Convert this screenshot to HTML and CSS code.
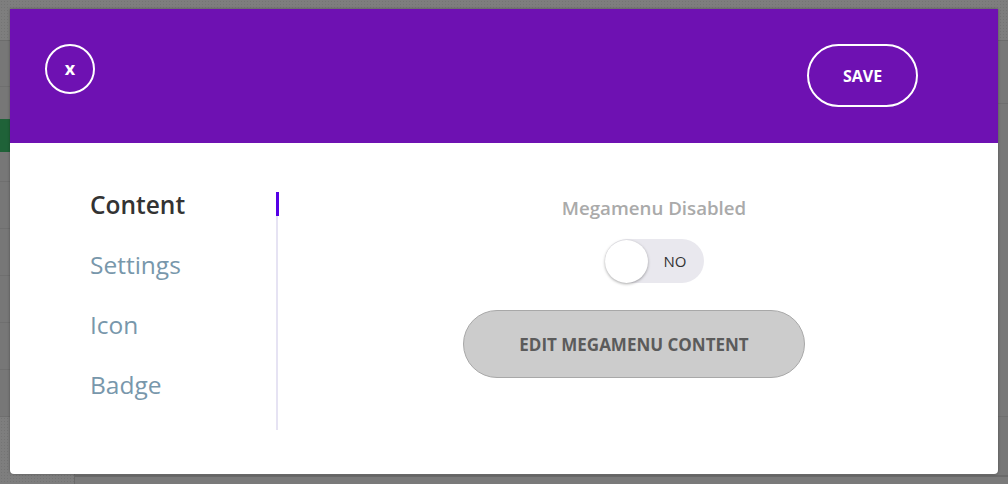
FILE: index.html
```html
<!DOCTYPE html>
<html lang="en">
<head>
    <meta charset="UTF-8">
    <meta name="viewport" content="width=device-width, initial-scale=1.0">
    <title>Menu Item Settings</title>
    <link rel="stylesheet" href="styles.css">
</head>
<body>
    <!-- dimmed admin page behind the modal -->
    <div class="backdrop">
        <div class="topbar"></div>
        <div class="page">
            <div class="side">
                <div class="side-head"></div>
                <div class="side-badge"></div>
                <div class="side-row"></div>
                <div class="side-row"></div>
                <div class="side-row"></div>
                <div class="side-row"></div>
                <div class="side-row"></div>
            </div>
            <div class="main">
                <div class="main-row tall"></div>
                <div class="main-row grow"></div>
            </div>
        </div>
        <div class="footer">
            <div class="footer-left"></div>
            <div class="footer-right"></div>
        </div>
    </div>

    <div class="modal">
        <div class="modal-header">
            <button class="btn-close">x</button>
            <button class="btn-save">Save</button>
        </div>
        <div class="modal-body">
            <ul class="tabs">
                <li class="tab active">Content</li>
                <li class="tab">Settings</li>
                <li class="tab">Icon</li>
                <li class="tab">Badge</li>
            </ul>
            <div class="panel">
                <div class="switch-group">
                    <div class="switch-label">Megamenu Disabled</div>
                    <div class="switch">
                        <span class="knob"></span>
                        <span class="switch-text">NO</span>
                    </div>
                </div>
                <button class="btn-edit">Edit Megamenu Content</button>
            </div>
        </div>
    </div>
</body>
</html>
```

FILE: styles.css
```css
* {
    box-sizing: border-box;
}

body {
    margin: 0;
    padding: 0;
    width: 1008px;
    height: 484px;
    overflow: hidden;
    font-family: 'Open Sans', 'Noto Sans', sans-serif;
    background: #787878;
    position: relative;
}

/* backdrop page */
.backdrop {
    display: flex;
    flex-direction: column;
    height: 484px;
}
.topbar {
    height: 41px;
    background-color: #7e7e7e;
    background-image: radial-gradient(#747474 1px, transparent 1px);
    background-size: 3px 3px;
    border-bottom: 1px solid #6c6c6c;
}
.page {
    flex: 1;
    display: flex;
}
.side {
    width: 75px;
    display: flex;
    flex-direction: column;
    background: #777;
}
.side-head {
    height: 46px;
    border-bottom: 1px solid #6f6f6f;
    margin-bottom: 32px;
}
.side-badge {
    height: 33px;
    background: #1f6238;
    margin-bottom: 29px;
}
.side-row {
    height: 47px;
    border-top: 1px solid #6f6f6f;
}
.main {
    flex: 1;
    display: flex;
    flex-direction: column;
}
.main-row.tall {
    height: 63px;
    border-bottom: 1px solid #6f6f6f;
}
.main-row.grow {
    flex: 1;
}
.footer {
    height: 68px;
    display: flex;
    border-top: 1px solid #6f6f6f;
}
.footer-left {
    width: 75px;
    background-color: #7e7e7e;
    background-image: radial-gradient(#747474 1px, transparent 1px);
    background-size: 3px 3px;
    border-right: 1px solid #6a6a6a;
}
.footer-right {
    flex: 1;
    background: linear-gradient(#777 58px, #6a6a6a 58px, #6a6a6a 60px, #7a7a7a 60px);
}

/* modal */
.modal {
    position: absolute;
    top: 9px;
    left: 10px;
    width: 988px;
    height: 465px;
    background: white;
    border-radius: 0 0 4px 4px;
    box-shadow: 0 0 3px rgba(0, 0, 0, 0.35);
    display: flex;
    flex-direction: column;
    overflow: hidden;
}

.modal-header {
    height: 134px;
    background: #6e11b2;
    display: flex;
    justify-content: space-between;
    align-items: flex-start;
    padding: 35px 80px 0 35px;
}

.btn-close {
    width: 50px;
    height: 50px;
    border: 2px solid white;
    border-radius: 50%;
    background: transparent;
    color: white;
    font-family: inherit;
    font-size: 18px;
    font-weight: 700;
    line-height: 1;
    padding: 0 0 2px 0;
}

.btn-save {
    width: 111px;
    height: 63px;
    border: 2px solid white;
    border-radius: 32px;
    background: transparent;
    color: white;
    font-family: inherit;
    font-size: 16px;
    font-weight: 700;
    text-transform: uppercase;
    padding: 0;
}

.modal-body {
    flex: 1;
    display: flex;
    padding-top: 49px;
}

.tabs {
    list-style: none;
    margin: 0 0 0 80px;
    padding: 0 0 34px 0;
    width: 188px;
    align-self: flex-start;
    border-right: 2px solid #e6e3f3;
    text-align: left;
}
.tab {
    position: relative;
    font-size: 24.5px;
    line-height: 25px;
    height: 24px;
    margin-bottom: 36px;
    color: #7897ab;
}
.tab:last-child {
    margin-bottom: 0;
}
.tab.active {
    color: #333;
    font-weight: 600;
}
.tab.active::after {
    content: "";
    position: absolute;
    top: 0;
    right: -3px;
    width: 3px;
    height: 24px;
    background: #5500e6;
}

.panel {
    flex: 1;
    display: flex;
    flex-direction: column;
    align-items: center;
    padding-right: 8px;
}

.switch-group {
    display: flex;
    flex-direction: column;
    align-items: center;
    margin-left: 40px;
}
.switch-label {
    font-size: 18.7px;
    font-weight: 600;
    color: #aaa;
    line-height: 24px;
    margin-top: 4px;
}
.switch {
    margin-top: 19px;
    width: 99px;
    height: 44px;
    border-radius: 22px;
    background: #e9e8ee;
    display: flex;
    align-items: center;
}
.knob {
    width: 43px;
    height: 43px;
    border-radius: 50%;
    background: white;
    box-shadow: 0 1px 3px rgba(0, 0, 0, 0.35);
}
.switch-text {
    margin-left: 16px;
    font-size: 15px;
    font-weight: 400;
    color: #333;
}

.btn-edit {
    margin-top: 27px;
    width: 342px;
    height: 68px;
    border: 1px solid #a8a8a8;
    border-radius: 34px;
    background: #cccccc;
    color: #5b5b5b;
    font-family: inherit;
    font-size: 17px;
    font-weight: 700;
    text-transform: uppercase;
    padding: 0;
}
```
